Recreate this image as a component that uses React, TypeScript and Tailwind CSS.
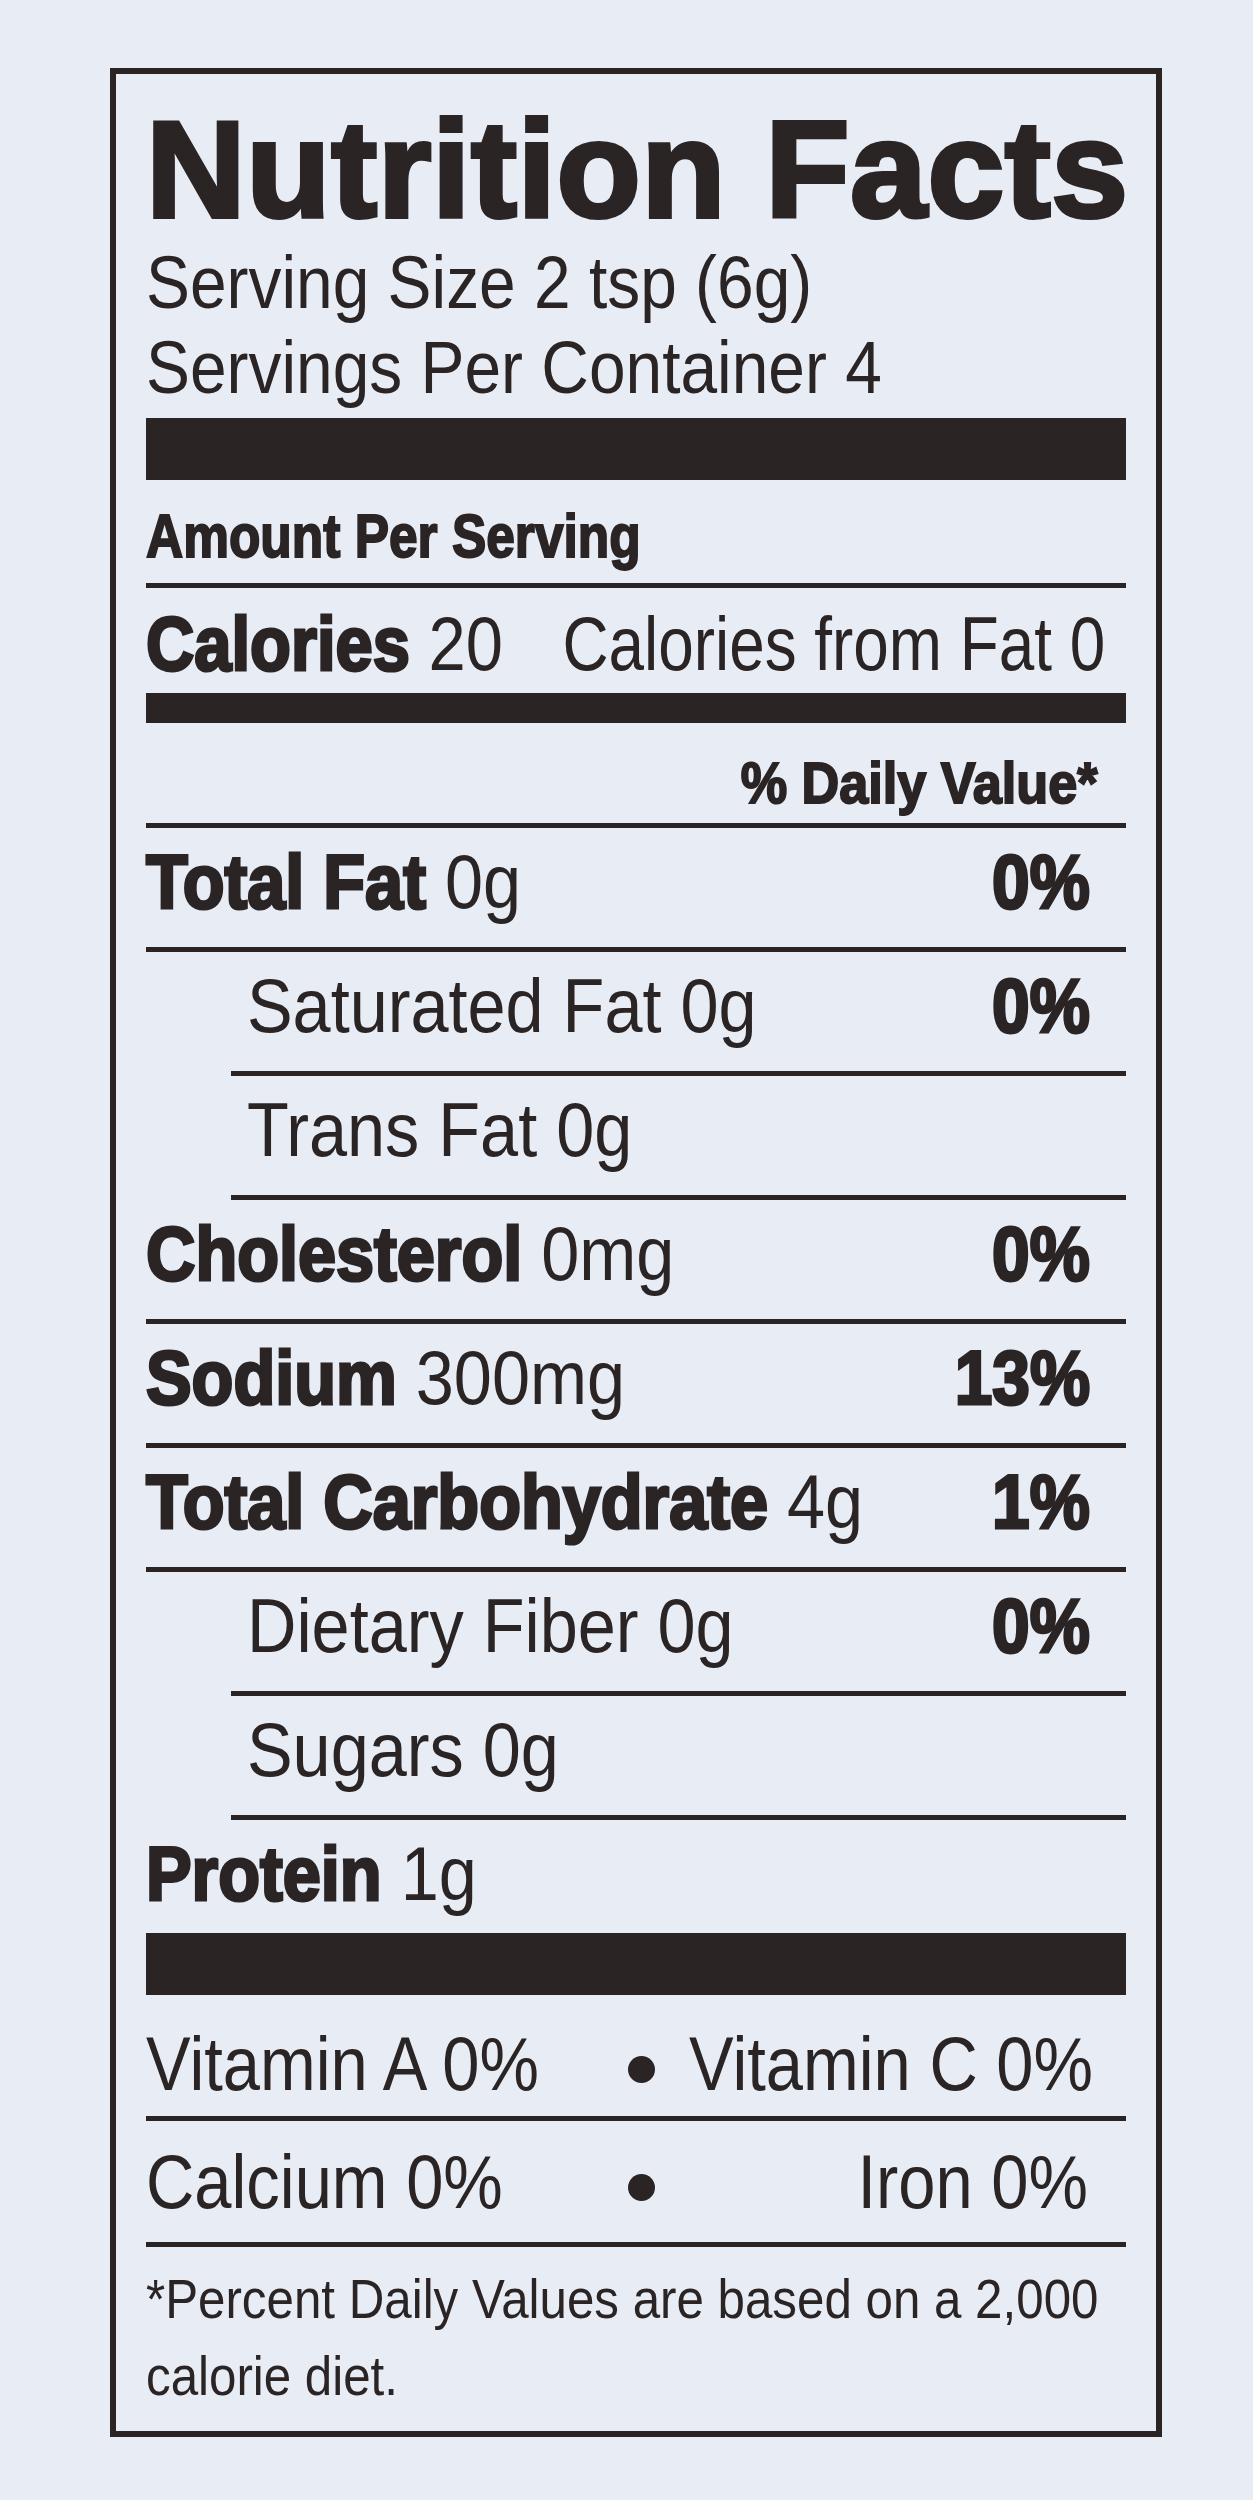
import clsx from "clsx";

type Nutrient = {
  name: string;
  amount: string;
  dv?: string;
  bold?: boolean;
  indent?: boolean;
  last?: boolean;
};

const nutrients: Nutrient[] = [
  { name: "Total Fat", amount: "0g", dv: "0%", bold: true },
  { name: "Saturated Fat", amount: "0g", dv: "0%", indent: true },
  { name: "Trans Fat", amount: "0g", indent: true },
  { name: "Cholesterol", amount: "0mg", dv: "0%", bold: true },
  { name: "Sodium", amount: "300mg", dv: "13%", bold: true },
  { name: "Total Carbohydrate", amount: "4g", dv: "1%", bold: true },
  { name: "Dietary Fiber", amount: "0g", dv: "0%", indent: true },
  { name: "Sugars", amount: "0g", indent: true },
  { name: "Protein", amount: "1g", bold: true, last: true },
];

// heavy condensed labels: Liberation Bold squeezed + a thin stroke
const heavy = "font-bold [-webkit-text-stroke:3px_#2a2425]";

function NutrientRow({ n }: { n: Nutrient }) {
  return (
    <div
      className={clsx(
        "flex justify-between pt-[16px] pr-[36px]",
        n.last ? "h-[113px]" : "h-[124px] border-b-[5px] border-[#2a2425]",
        n.indent && "ml-[85px] pl-[16px]"
      )}
    >
      <span className="inline-block origin-left scale-x-[0.9] whitespace-nowrap text-[76px] leading-[76px]">
        {n.bold ? <span className={heavy}>{n.name}</span> : n.name} {n.amount}
      </span>
      {n.dv && (
        <span className={clsx("inline-block origin-right scale-x-[0.89] whitespace-nowrap text-[76px] leading-[76px]", heavy)}>
          {n.dv}
        </span>
      )}
    </div>
  );
}

function Bullet() {
  return <span className="mt-[30px] ml-[12px] h-[27px] w-[27px] shrink-0 rounded-full bg-[#2a2425]" />;
}

export default function App() {
  return (
    <div className="min-h-[2500px] bg-[#e8ecf5] pt-[68px] pl-[110px] font-['Liberation_Sans',Arial,sans-serif] text-[#2a2425]">
      <div className="w-[1052px] border-[6px] border-[#2a2425] px-[30px] pt-[26px] pb-[17px]">
        <h1 className="whitespace-nowrap text-[138px] leading-[138px] font-bold tracking-[0.6px] [-webkit-text-stroke:4px_#2a2425]">
          Nutrition Facts
        </h1>

        <div className="mt-[2px] text-[74px] leading-[85px]">
          <span className="block origin-left scale-x-[0.89] whitespace-nowrap">Serving Size 2 tsp (6g)</span>
          <span className="block origin-left scale-x-[0.89] whitespace-nowrap">Servings Per Container 4</span>
        </div>

        <div className="mt-[8px] h-[62px] bg-[#2a2425]" />

        <div className="h-[108px] border-b-[5px] border-[#2a2425] pt-[25px]">
          <span className="inline-block origin-left scale-x-[0.83] whitespace-nowrap text-[62px] leading-[62px] font-bold [-webkit-text-stroke:2px_#2a2425]">
            Amount Per Serving
          </span>
        </div>

        <div className="flex h-[105px] justify-between pt-[18px] pr-[21px] text-[76px] leading-[76px]">
          <span className="inline-block w-[300px] shrink-0 origin-left scale-x-[0.88] whitespace-nowrap">
            <span className={heavy}>Calories</span> 20
          </span>
          <span className="inline-block origin-right scale-x-[0.84] whitespace-nowrap">Calories from Fat 0</span>
        </div>

        <div className="h-[30px] bg-[#2a2425]" />

        <div className="flex h-[105px] justify-end border-b-[5px] border-[#2a2425] pt-[31px] pr-[28px]">
          <span className="inline-block origin-right scale-x-[0.9] whitespace-nowrap text-[58px] leading-[58px] font-bold [-webkit-text-stroke:2px_#2a2425]">
            % Daily Value*
          </span>
        </div>

        {nutrients.map((n) => (
          <NutrientRow key={n.name} n={n} />
        ))}

        <div className="h-[62px] bg-[#2a2425]" />

        <div className="flex h-[126px] border-b-[5px] border-[#2a2425] pt-[31px] text-[76px] leading-[76px]">
          <span className="inline-block w-[470px] shrink-0 origin-left scale-x-[0.88] whitespace-nowrap">Vitamin A 0%</span>
          <Bullet />
          <span className="ml-[34px] inline-block origin-left scale-x-[0.88] whitespace-nowrap">Vitamin C 0%</span>
        </div>

        <div className="flex h-[126px] border-b-[5px] border-[#2a2425] pt-[23px] text-[76px] leading-[76px]">
          <span className="inline-block w-[470px] shrink-0 origin-left scale-x-[0.88] whitespace-nowrap">Calcium 0%</span>
          <Bullet />
          <div className="flex flex-1 justify-end pr-[38px]">
            <span className="inline-block origin-right scale-x-[0.88] whitespace-nowrap">Iron 0%</span>
          </div>
        </div>

        <div className="pt-[13px] text-[56px] leading-[77px]">
          <span className="block origin-left scale-x-[0.88] whitespace-nowrap">*Percent Daily Values are based on a 2,000</span>
          <span className="block origin-left scale-x-[0.88] whitespace-nowrap">calorie diet.</span>
        </div>
      </div>
    </div>
  );
}
